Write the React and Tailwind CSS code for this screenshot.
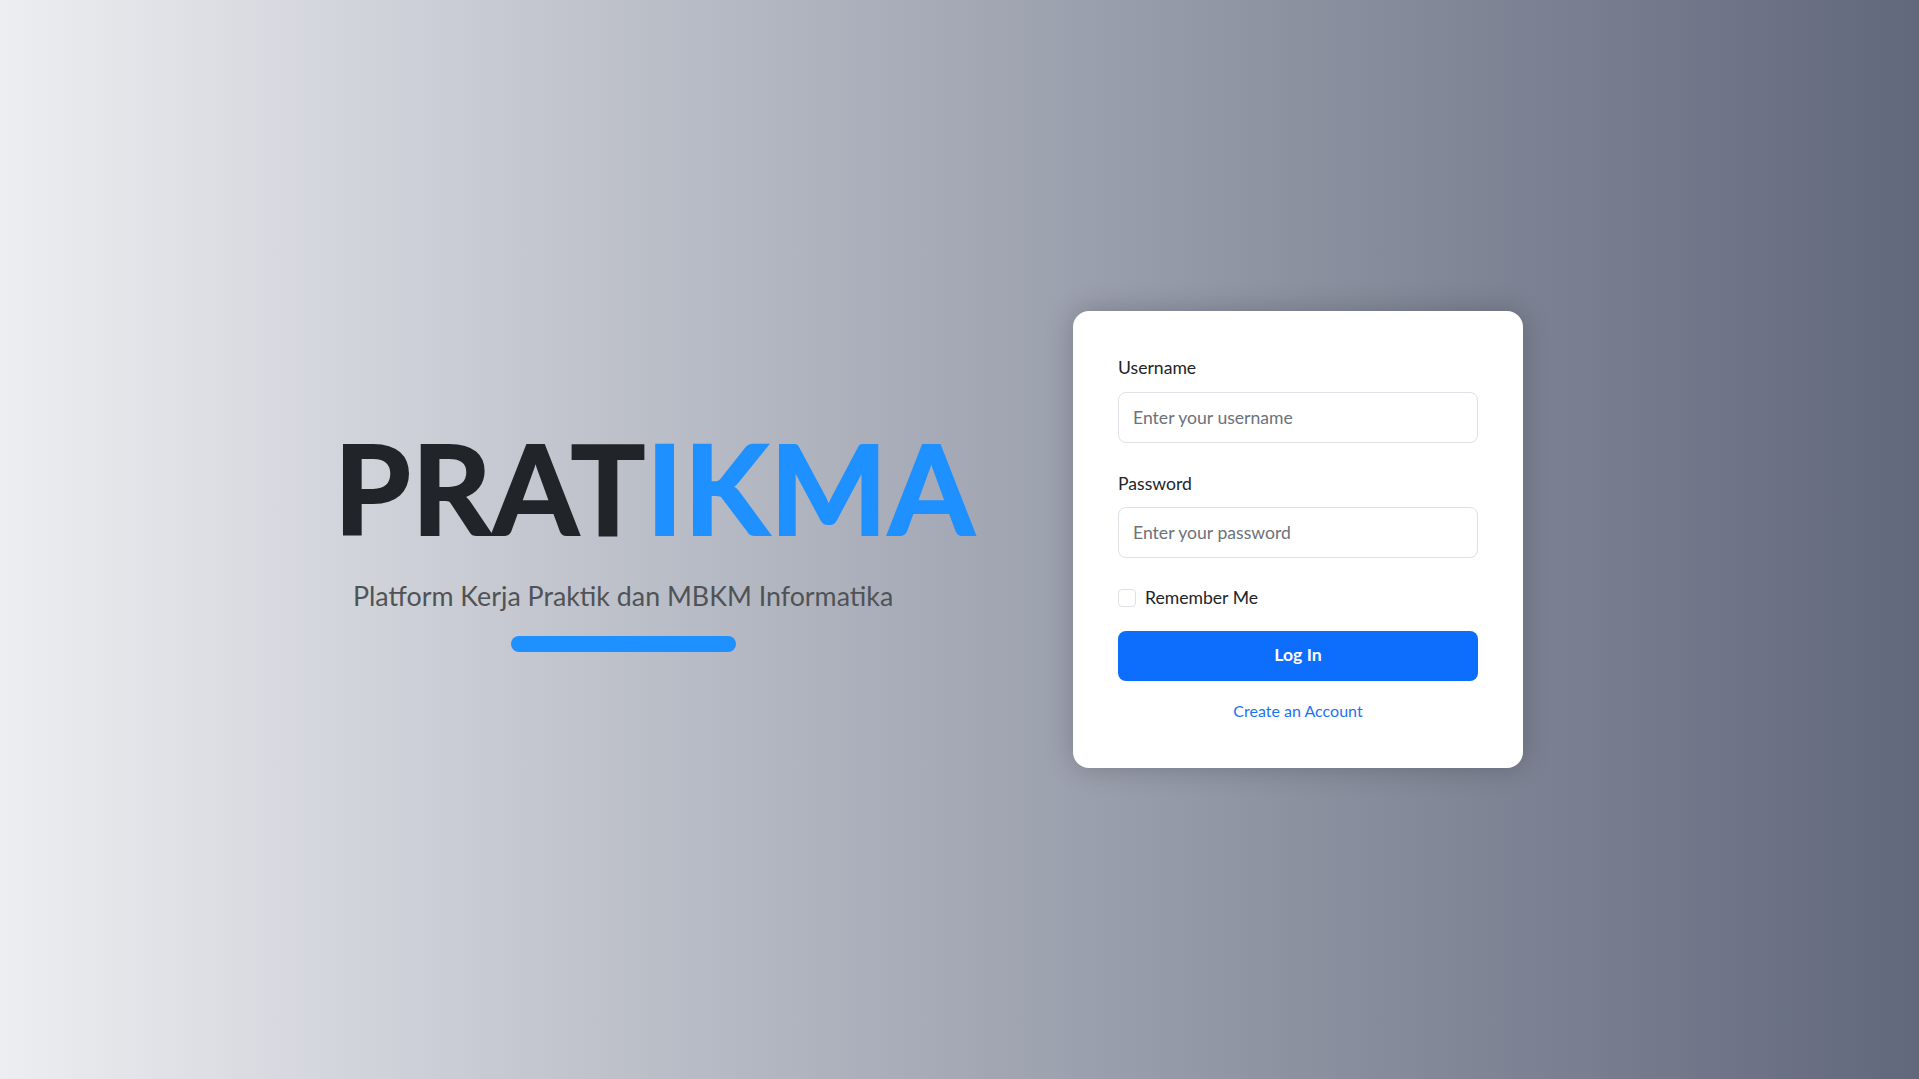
import React, { useState } from 'react';

export default function App() {
  const [remember, setRemember] = useState(false);

  return (
    <div
      className="min-h-screen w-full flex items-center bg-gradient-to-r from-[#eceef1] to-[#62687c]"
      style={{ fontFamily: 'Lato, "Open Sans", sans-serif' }}
    >
      {/* Brand */}
      <div className="ml-[334px] w-[739px] flex flex-col items-start -mt-[14px]">
        <h1 className="text-[124px] leading-[1.2] font-bold text-[#212529] tracking-[1px] [-webkit-text-stroke:2px_currentColor]">
          PRAT<span className="text-[#1e90ff]">IKMA</span>
        </h1>
        <div className="ml-[19px] mt-[14px] flex flex-col items-center">
          <p className="text-[26.8px] leading-[1.5] text-[#505356]">
            Platform Kerja Praktik dan MBKM Informatika
          </p>
          <div className="mt-[20px] w-[225px] h-[16px] rounded-full bg-[#1e90ff]"></div>
        </div>
      </div>

      {/* Login card */}
      <div className="w-[450px] bg-white rounded-2xl shadow-[0_0_28px_rgba(0,0,0,0.22)] px-[45px] pt-[44px] pb-[45px]">
        <form onSubmit={(e) => e.preventDefault()} className="text-[17.6px] leading-[1.5] text-[#212529]">
          <label className="block mb-[10px]">Username</label>
          <input
            type="text"
            placeholder="Enter your username"
            className="block w-full h-[51px] px-[14px] border border-[#dee2e6] rounded-lg outline-none placeholder:text-[#6c727a]"
          />

          <label className="block mt-[28px] mb-[10px]">Password</label>
          <input
            type="password"
            placeholder="Enter your password"
            className="block w-full h-[51px] px-[14px] border border-[#dee2e6] rounded-lg outline-none placeholder:text-[#6c727a]"
          />

          <label className="flex items-center mt-[27px] cursor-pointer">
            <input
              type="checkbox"
              checked={remember}
              onChange={(e) => setRemember(e.target.checked)}
              className="appearance-none w-[18px] h-[18px] border border-[#dee2e6] rounded bg-white checked:bg-[#0d6efd]"
            />
            <span className="ml-[9px]">Remember Me</span>
          </label>

          <button
            type="submit"
            className="mt-[19px] w-full h-[50px] rounded-lg bg-[#0d6efd] text-white font-bold"
          >
            Log In
          </button>

          <div className="mt-[18px] text-center text-[16px] leading-[1.5]">
            <a href="#" className="text-[#1a73f5]">Create an Account</a>
          </div>
        </form>
      </div>
    </div>
  );
}
